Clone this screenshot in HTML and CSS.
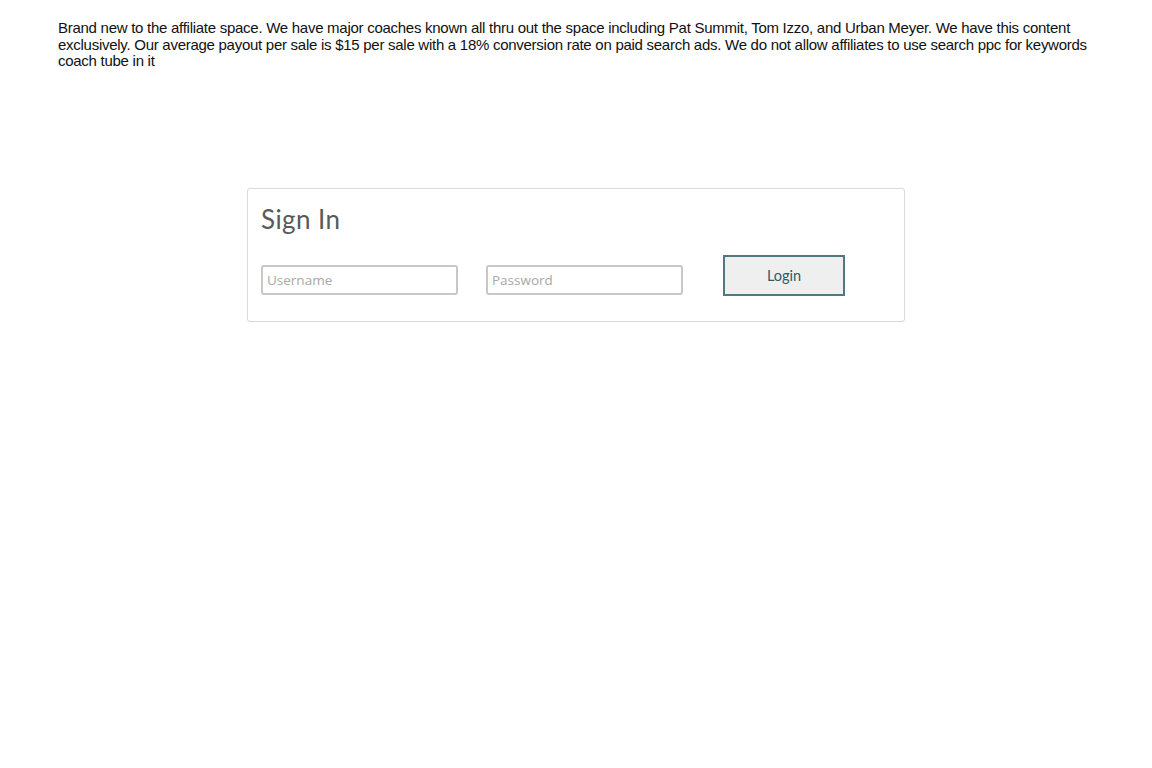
FILE: index.html
```html
<!DOCTYPE html>
<html>
<head>
<meta charset="utf-8">
<link rel="stylesheet" href="styles.css">
</head>
<body>
<div class="page">
  <p class="intro">Brand new to the affiliate space. We have major coaches known all thru out the space including Pat Summit, Tom Izzo, and Urban Meyer. We have this content exclusively. Our average payout per sale is $15 per sale with a 18% conversion rate on paid search ads. We do not allow affiliates to use search ppc for keywords coach tube in it</p>
  <div class="card">
    <h1 class="title">Sign In</h1>
    <form class="form">
      <input class="field" type="text" placeholder="Username">
      <input class="field" type="password" placeholder="Password">
      <button class="login" type="button">Login</button>
    </form>
  </div>
</div>
</body>
</html>
```
FILE: styles.css
```css
html, body {
  margin: 0;
  padding: 0;
  background: #fff;
}
.page {
  padding: 20px 58px 0 58px;
}
.intro {
  margin: 0;
  font-family: "Liberation Sans", Arial, sans-serif;
  font-size: 15px;
  line-height: 16.5px;
  letter-spacing: -0.27px;
  color: #111;
}
.card {
  width: 656px;
  height: 132px;
  margin: 118px 0 0 189px;
  border: 1px solid #d9d9d9;
  border-radius: 3px;
  box-sizing: content-box;
  padding: 0;
}
.title {
  margin: 0;
  padding: 14px 0 0 13px;
  font-family: "Lato", "Open Sans", sans-serif;
  font-weight: 400;
  font-size: 26px;
  line-height: 32px;
  color: #5a5a5a;
  letter-spacing: 0.4px;
}
.form {
  display: flex;
  align-items: flex-end;
  margin: 20px 0 0 13px;
}
.field {
  width: 197px;
  height: 30px;
  box-sizing: border-box;
  border: 2px solid #c8c8c8;
  border-radius: 3px;
  padding: 0 4px;
  margin: 0 28px 0 0;
  font-family: "Open Sans", "Lato", sans-serif;
  font-size: 13.5px;
  color: #333;
  background: #fff;
  outline: none;
}
.field::placeholder {
  color: #a8a8a8;
}
.field + .field {
  margin-right: 40px;
}
.login {
  width: 122px;
  height: 41px;
  box-sizing: border-box;
  margin-bottom: -1px;
  border: 2px solid #4f7884;
  border-radius: 0;
  background: #efefef;
  color: #30596a;
  font-family: "Lato", "Open Sans", sans-serif;
  font-size: 14.5px;
  font-weight: 400;
  cursor: pointer;
}
```
